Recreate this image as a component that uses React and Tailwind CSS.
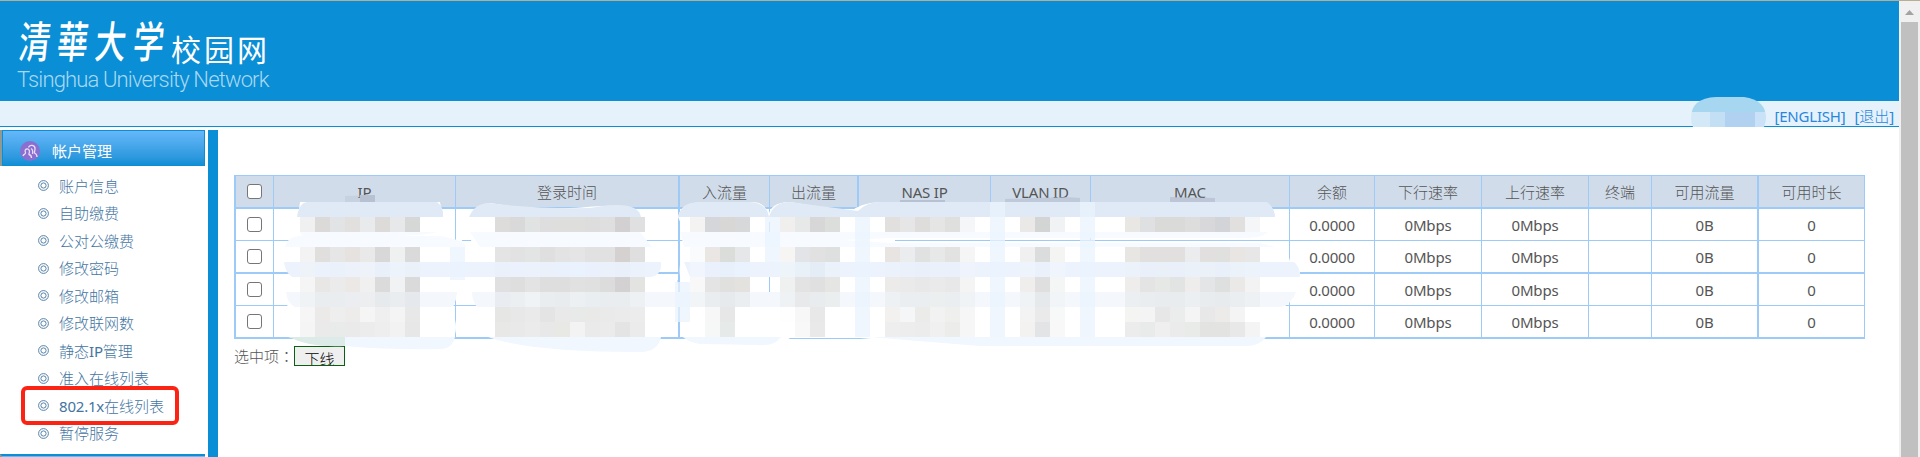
const menu = ['账户信息', '自助缴费', '公对公缴费', '修改密码', '修改邮箱', '修改联网数', '静态IP管理', '准入在线列表', '802.1x在线列表', '暂停服务'];

const cols = 'grid grid-cols-[38px_182px_224px_90px_89px_132px_100px_199px_85px_107px_107px_63px_107px_106px]';
const heads = ['', 'IP', '登录时间', '入流量', '出流量', 'NAS IP', 'VLAN ID', 'MAC', '余额', '下行速率', '上行速率', '终端', '可用流量', '可用时长'];
const thick = [2, 4, 12];
const values = ['', '', '', '', '', '', '', '', '0.0000', '0Mbps', '0Mbps', '', '0B', '0'];

// Latin runs are set in regular weight, Chinese runs in light
function Label({ text }) {
  return (
    <span className="whitespace-pre">
      {text.split(/([\x20-\x7e]+)/).filter(Boolean).map((part, i) => (
        /[\x20-\x7e]/.test(part)
          ? <span key={i} className="font-normal tracking-[-0.2px]">{part}</span>
          : <span key={i}>{part}</span>
      ))}
    </span>
  );
}

function Cell({ i, text }) {
  return (
    <div className={`flex items-center justify-center border-[#9dcaf6] ${thick.includes(i) ? 'border-r-2' : 'border-r'} ${i ? 'pt-px' : ''}`}>
      {i === 0 ? <Check /> : <Label text={text} />}
    </div>
  );
}

function Check() {
  return <span className="size-[15px] rounded-[3px] border-[1.5px] border-[#767676] bg-white" />;
}

// Grey tones for each 15px block, left to right, row by row
const groups = [
  { x: 300, rows: [
    [217, 'f0f0f0 dcdad8 e1e3e4 e2e0df e9eaeb dcdbd9 e6e8e9 d6d8d7'],
    [247, 'f3f3f3 e1dfdd e6e6e6 e5e2df e9e9ea d9d8d8 eff1f0 dadada'],
    [262, 'eef3fa ecf2fb ebf1fa edf2fa eef3fa eaf0f9 edf3fb eaf1f9'],
    [277, 'f5f5f5 e9e7e6 ecebeb ebe8e5 f0f0f0 dbdbdb f1f2f3 dadada'],
    [292, 'f0f3f5 e9edf0 eaedf0 ebedf0 eceef0 e6eaed e9edf0 e5e9ed'],
    [307, 'f6f6f6 ebeae9 eeeeee eeecea f5f5f5 efefef f4f4f4 e8e8e8'],
    [322, 'f5f5f5 e9eae9 e9ebea eaeaea ececec eeeeee f2f2f2 e7e7e7'],
  ] },
  { x: 495, rows: [
    [217, 'dedcda d9d9d9 e1e3e2 dedede dededd dededd dddddd e0dfdf d2d0d1 dfe0df'],
    [247, 'e5e4e4 e2e2e2 e3e4e4 dfdfdf e3e3e3 e5e5e5 e1e1e1 e1e1e1 d4d1d0 dfdfdf'],
    [262, 'eaf1fb ebf2fd ebf2fc eaf1fb e9f1fc eaf2fd eaf1fc ebf1fb eaf0fa ebf2fc'],
    [277, 'e0e0e0 dedede e3e3e3 dedede dedede e1e1e1 dfe0df dcdcdc d3d1d1 e3e3e2'],
    [292, 'e9ecf0 eceff2 f0f3f6 e9edf0 e8ecef ecf0f3 e9eef1 e9edef e9edf0 eef1f4'],
    [307, 'e6e6e5 e8e8e8 eaeaea e5e4e4 e9e9e9 e8e9e9 e9e9e8 eaeaea ebebeb ececec'],
    [322, 'e8e8e7 e9e9e9 ebebeb e8e8e8 e8e8e5 f3f3f3 eaeaea ebebeb e4e4e4 ebebeb'],
  ] },
  { x: 690, rows: [
    [217, 'f5f3f2 d5d6d9 d9d7d5 d7d8da'],
    [247, 'fafbfc e9e6e4 dbdddb e6e7e8'],
    [262, 'f1f6fe eaf1fc e8f0fb eaf2fd'],
    [277, 'f8f8f8 e4e4e4 e0e1df e3e2df'],
    [292, 'f2f5f7 e9edf0 e6eaed eaeef0'],
    [307, 'ffffff f7f7f7 e6e7e6 ffffff'],
    [322, 'ffffff f6f8f7 e6eae8 ffffff'],
  ] },
  { x: 780, rows: [
    [217, 'f0efed e7e9e8 d7d7d7 dcdedc'],
    [247, 'f6f5f3 e3e4e7 e1e1e1 dde0df'],
    [262, 'edf5fb e8f1f8 e4ecf5 ebf2fa'],
    [277, 'eff0f0 e4e3e4 dfe0df e5e5e3'],
    [292, 'eef2f4 e7e9eb e9ecee eaeeef'],
    [307, 'fefefe f7f7f7 e8e8e8 ffffff'],
    [322, 'ffffff f8f8f8 e9e9e9 ffffff'],
  ] },
  { x: 885, rows: [
    [217, 'e1e0df e6e6e6 dedddb e5e5e5 dfdfde f5f6f7'],
    [247, 'e7e4e2 ebecee e0e1e1 e7e9e9 e2e2e1 f5f5f5'],
    [262, 'ecf2fc ebf1fa e9f0fa eaf1fa ebf1fa eff4fc'],
    [277, 'edebe9 eaeaeb e8e8e8 ebeaea e7e8e7 f4f4f4'],
    [292, 'edf1f3 ebeef0 eaeef0 ecefef ebeef0 eff3f5'],
    [307, 'f3f1ef f5f6f8 ebebe9 f2f2f2 efefee f6f6f6'],
    [322, 'eeeeee ededed ececec f0f0f0 ececea f6f6f6'],
  ] },
  { x: 1020, rows: [
    [217, 'ebe9e8 d3d5d4 f1f2f4'],
    [247, 'f0f0f0 dbdddc f4f4f3'],
    [262, 'eef4fc eaf1fa f0f5fd'],
    [277, 'efeeec dfdfdf f4f6f5'],
    [292, 'f0f3f5 e5e9ec f2f5f7'],
    [307, 'f3f3f3 eaeaea f7f9f8'],
    [322, 'f4f2f1 e3e4e6 f8f8f8'],
  ] },
  { x: 1125, rows: [
    [217, 'e8e7e4 dfe0e2 dadad8 dadad9 dddddd d8d8da d3d4d7 e2e0de f5f6f7'],
    [247, 'e7e6e3 e1e0df e1e0de e1e0df ebecee e1e0df e0e0df e8e5e3 e7e7e8'],
    [262, 'ecf2fa e9f0f9 eaf0f8 e9f0f9 ebf1f9 eaf1f9 e9f0f9 ecf2fa edf3fb'],
    [277, 'efedeb e4e4e4 e5e8e5 e1e4e2 efedec e4e5e6 dde0de ebe9e7 f3f3f3'],
    [292, 'eceff2 e9edf0 e8ecef e8ecee eceff1 e9ecef e7ebed ebeef0 eef1f4'],
    [307, 'f4f4f3 f4f4f4 e7e7e7 ebedec f4f4f4 e8e8e8 edebe9 f4f4f4 ffffff'],
    [322, 'ececec e9ebea efefef ebebeb e9ebe9 e3e4e1 e3e3e1 e8e8e8 f4f4f4'],
  ] },
];

function Mosaic() {
  return (
    <svg className="pointer-events-none absolute left-0 -top-px" width="1899" height="457" viewBox="0 0 1899 457">
      <g fill="#ffffff">
        <path d="M300 202H440L443 217L438 232H448Q465 237 465 250L467 256H474Q468 266 472 277L460 280Q456 300 452 310Q460 330 452 340H300L288 337Q280 318 290 300Q282 290 290 272Q280 260 286 247Q286 238 302 235L298 217Z" />
        <path d="M469 217Q474 205 490 203Q540 212 600 206Q645 203 640 225L648 245L660 250Q665 268 650 276L675 286V312L662 320Q665 345 640 350L520 346Q485 340 488 330L478 300L474 280L472 250Z" />
        <path d="M678 217Q680 202 705 202H752Q767 202 768 217Q770 202 790 202L850 212Q860 203 880 202H1265Q1275 208 1274 217L1268 232L1275 248Q1290 254 1290 262L1300 272Q1295 300 1285 306L1265 325Q1260 340 1240 345H940L860 338H790L780 344H700L681 330V280Q676 265 688 240Z" />
      </g>
      {/* Cell borders that still show between the covered areas */}
      <path d="M455.500 228V240M769.500 222V236M769.500 277V305M678 280V283M1090.500 236V241M895 240.500H1289M770 305.500H785M1090.500 303V306" stroke="#9dcaf6" fill="none" />
      <g fill="#e0eaf6">
        <path d="M297 217Q299 203 307 202H437Q444 207 443 217Z" />
        <path d="M469 217Q475 203 489 203Q535 209 590 208Q638 199 641 217Z" />
        <path d="M678 217Q681 202 700 202H750Q767 203 769 217Q773 202 790 202L858 211Q867 202 880 202H1267Q1275 208 1275 217Z" />
      </g>
      <g fill="#f7fafe">
        <path d="M300 232H437Q420 238 302 236Z" />
        <path d="M285 247Q288 235 304 236H440Q465 240 466 247Z" />
        <path d="M470 232H640L652 247H480Z" />
        <path d="M680 232H1268Q1264 237 1250 238H890L684 247Z" />
        <path d="M690 247Q700 240 780 236L890 243H1260L1275 247Z" />
      </g>
      <g fill="#ecf3fd">
        <path d="M284 262H661Q662 276 650 277H292Q285 272 284 262Z" />
        <path d="M684 262H1294Q1300 266 1300 277H690Z" />
      </g>
      <g fill="#f4f8fc">
        <path d="M286 292H457Q456 305 451 307H295Q287 303 286 292Z" />
        <path d="M472 292H1296Q1292 304 1281 307H477Q472 301 472 292Z" />
      </g>
      <g fill="#f1f7fe">
        <path d="M345 337H455Q452 349 440 349Q390 350 345 346Z" />
        <path d="M488 337H661Q658 352 640 352Q530 352 488 337Z" />
        <path d="M683 337H781Q775 345 765 345L700 344Q688 342 683 337Z" />
        <path d="M870 337H1266Q1260 346 1245 346H980Q930 342 870 337Z" />
      </g>
      <path d="M289 337H345V346Q310 348 289 337Z" fill="#dcebe8" />
      <g fill="#eaf3fe" opacity=".75">
        <path d="M450 247H465V280H450ZM675 282H690V322H675ZM765 217H780V262H765ZM855 217H870V337H855ZM990 202H1005V337H990ZM1080 202H1095V337H1080Z" />
      </g>
      {groups.map((g) => g.rows.map(([y, tones]) => tones.split(' ').map((t, i) => (
        <rect key={`${g.x}-${y}-${i}`} x={g.x + i * 15} y={y} width="15" height="15" fill={`#${t}`} shapeRendering="crispEdges" />
      ))))}
      <g fill="#b7c1d1">
        <path d="M345 196L375 195V202H345Z" opacity=".35" />
        <path d="M360 195H375V202H360Z" />
        <path d="M900 200H945V202H900Z" />
        <path d="M1005 199L1065 197L1080 198V202H1005Z" opacity=".7" />
        <path d="M1170 197L1215 198V202H1170Z" opacity=".8" />
      </g>
    </svg>
  );
}

export default function App() {
  return (
    <div className="relative flex h-[457px] w-[1920px] flex-col overflow-hidden border-t border-[#b8ae94] bg-white font-['Noto_Sans','Noto_Sans_CJK_SC',sans-serif] text-[15px] font-light text-[#555]">
      <div className="flex min-h-0 flex-1">
        <div className="flex w-[1899px] flex-col">
          <header className="h-[100px] shrink-0 bg-[#0a8ed5] pl-[17px] pt-[11px] text-white">
            <div className="flex h-[54px] items-end">
              <span className="flex w-[154px] origin-bottom-left -skew-x-[8deg] scale-y-[1.4] gap-[7px] whitespace-nowrap pb-px font-['Noto_Sans_CJK_TC',sans-serif] text-[31px] font-medium leading-[36px]">
                <span>清</span><span>華</span><span>大</span><span>学</span>
              </span>
              <span className="h-[39px] whitespace-nowrap font-['Noto_Sans_CJK_SC',sans-serif] text-[30px] font-normal leading-[42px] tracking-[3px]">校园网</span>
            </div>
            <div className="whitespace-nowrap pt-[2px] font-[Roboto,sans-serif] text-[22px] font-light leading-[24px] tracking-[-0.85px] text-[#a9d8f3]">Tsinghua University Network</div>
          </header>
          <div className="flex h-[26px] shrink-0 items-center justify-end gap-[9px] border-b border-[#0a8ed5] bg-[#e5f2fb] pr-[5px] pt-[5px] text-[#2a86dc]">
            <Label text="[ENGLISH]" />
            <Label text="[退出]" />
          </div>
          <div className="flex min-h-0 flex-1 pt-[3px]">
            <aside className="flex w-[205px] flex-col">
              <div className="flex h-9 shrink-0 items-center border-l-2 border-[#8f9a94] bg-linear-to-b from-[#66b9fb] to-[#0a8ed5] pt-[6px] text-white shadow-[inset_1px_1px_0_#0a8ed5,inset_-1px_-1px_0_#0a8ed5]">
                <svg className="ml-[18px] mr-[12px]" width="20" height="20" viewBox="0 0 20 20" fill="none">
                  <circle cx="10" cy="10" r="10" fill="#8a6fd0" />
                  <path d="M3 15C3.500 12.500 6 13.500 5.500 11.500C3.500 7.500 9.500 6.500 9.500 10.500C9.500 12.500 8.500 12.500 9 13.500C11 14 11.500 15 11.500 17M8.500 6.500C9.500 3 15.500 4 15 8C15 10.500 14 11 14.500 12C17 13 17 14 17 16M12.500 13C13 10.500 13 8.500 11 7.500" stroke="#e9dcf8" strokeWidth="1.300" />
                </svg>
                <span className="pt-px font-normal">帐户管理</span>
              </div>
              <ul className="flex shrink-0 flex-col pt-[6px] text-[#44759f]">
                {menu.map((m) => (
                  <li key={m} className="flex h-[27.5px] shrink-0 items-center">
                    <svg className="ml-[38px] mr-[10px]" width="11" height="11" viewBox="0 0 11 11" fill="none" stroke="#44759f">
                      <circle cx="5.500" cy="5.500" r="4.900" strokeWidth=".9" />
                      <circle cx="5.500" cy="5.500" r="2.600" strokeWidth=".9" />
                    </svg>
                    <Label text={m} />
                  </li>
                ))}
              </ul>
              <div className="mt-[7px] h-[10px] border-l-2 border-t-2 border-l-[#8f9a94] border-t-[#0a8ed5] bg-[#66b9fb]" />
            </aside>
            <div className="ml-[3px] w-[10px] bg-[#0a8ed5]" />
            <main className="ml-4 mt-[45px] flex w-[1631px] flex-col">
              <div className="border-l-2 border-t border-[#9dcaf6]">
                <div className={`${cols} h-[33px] border-b-2 border-[#9dcaf6] bg-[#d0dcea]`}>
                  {heads.map((h, i) => <Cell key={i} i={i} text={h} />)}
                </div>
                {[0, 1, 2, 3].map((r) => (
                  <div key={r} className={`${cols} border-[#9dcaf6] ${r % 2 ? 'h-[33px] border-b-2' : 'h-8 border-b'}`}>
                    {values.map((v, i) => <Cell key={i} i={i} text={v} />)}
                  </div>
                ))}
              </div>
              <div className="flex pt-[6px]">
                <span className="w-[60px] whitespace-nowrap leading-[22px]">选中项<span className="font-['Noto_Sans_CJK_TC']">：</span></span>
                <button className="mt-px flex h-5 w-[51px] items-start justify-center overflow-hidden border border-[#0b5e12] bg-[#efefef] pt-[2px] leading-[20px] text-black">下线</button>
              </div>
            </main>
          </div>
        </div>
        <div className="flex w-[21px] flex-col items-center bg-[#f0f0f0]">
          <svg width="21" height="21" viewBox="0 0 21 21"><path d="M6 14L10.500 9L15 14Z" fill="#a3a3a3" /></svg>
          <div className="w-[17px] flex-1 bg-[#c0c0c0]" />
        </div>
      </div>
      <Mosaic />
      <svg className="absolute left-[1691px] top-[95px]" width="76" height="32">
        <clipPath id="pill"><path d="M0 22Q0 2 25 1H53Q75 4 75 22Q75 26 73 31H2Q0 27 0 22Z" /></clipPath>
        <g clipPath="url(#pill)">
          <path fill="#a7d7f0" d="M0 0H76V16H0Z" />
          <path fill="#d3e9f8" d="M0 16H19V32H0Z" />
          <path fill="#c2dff4" d="M19 16H34V32H19Z" />
          <path fill="#b1d1f0" d="M34 16H64V32H34Z" />
          <path fill="#c9e2f8" d="M64 16H76V32H64Z" />
        </g>
      </svg>
      <div className="absolute left-[21px] top-[385px] h-[39px] w-[158px] rounded-[6px] border-4 border-[#fb2313]" />
    </div>
  );
}
